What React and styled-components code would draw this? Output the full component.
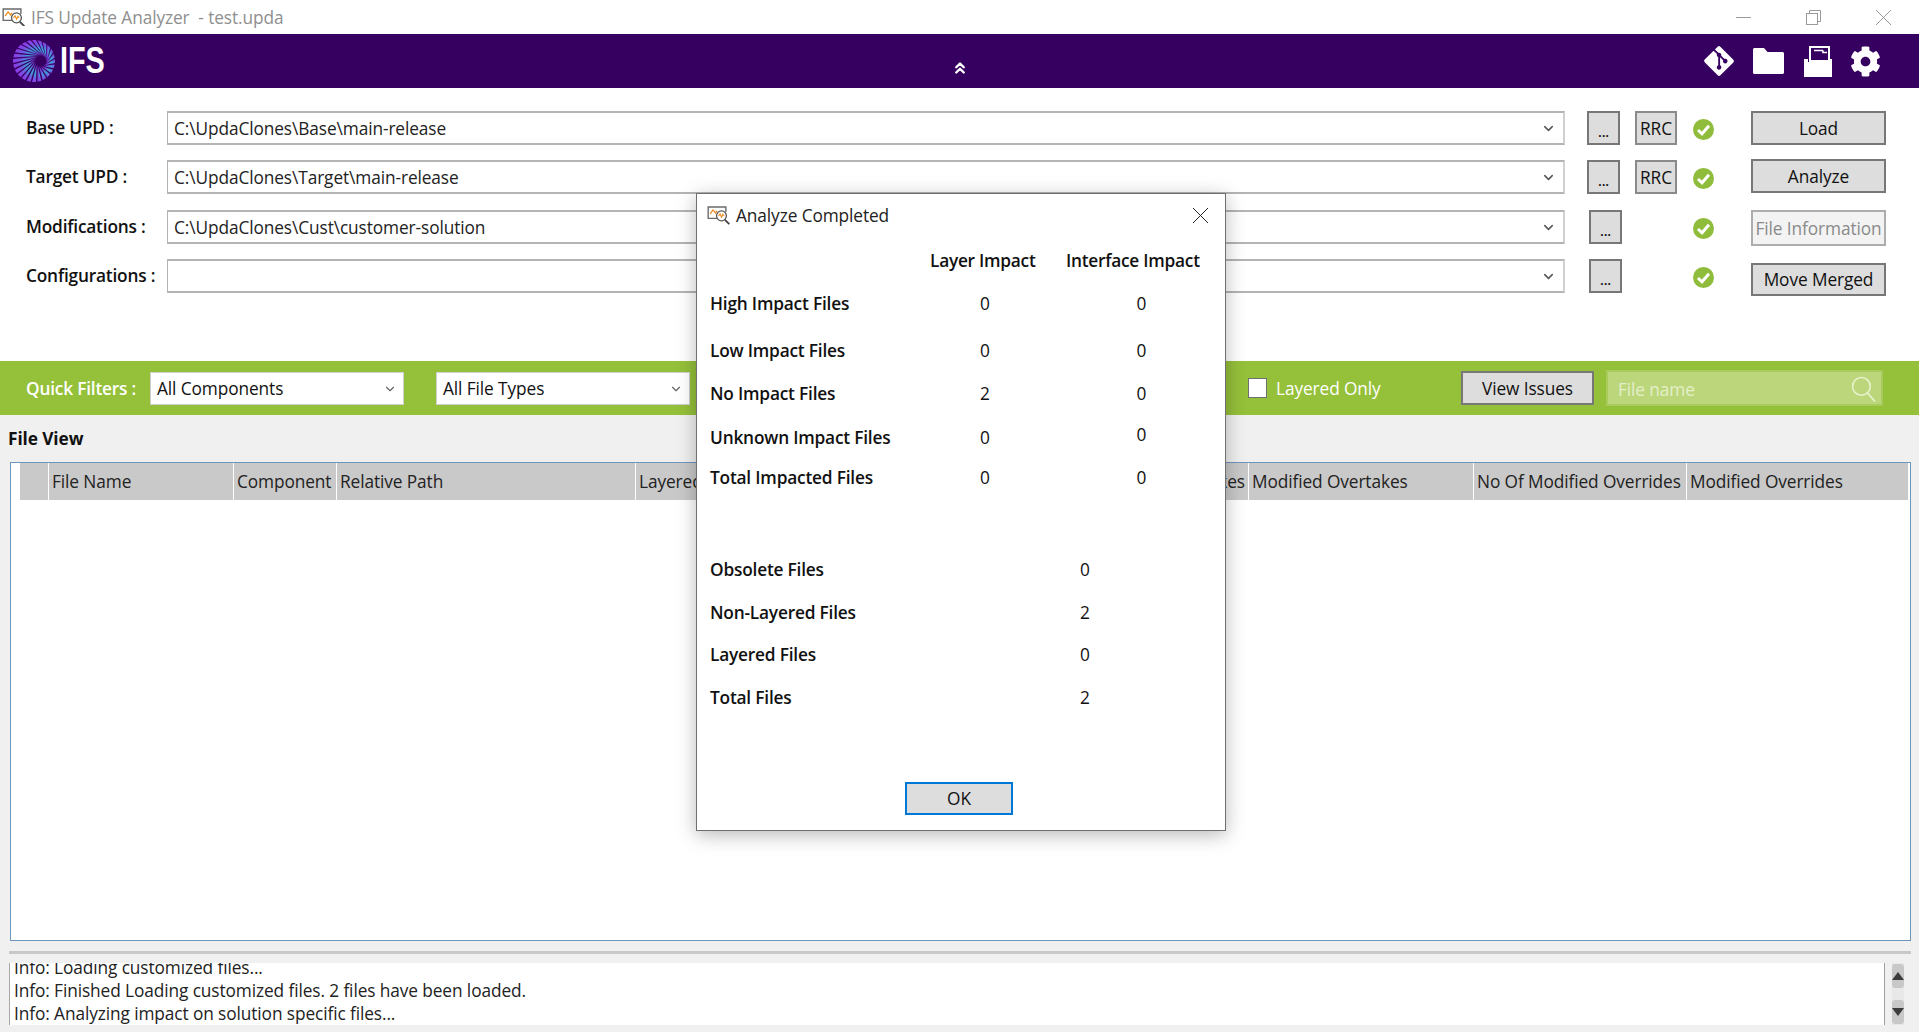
import React from "react";
import styled, { createGlobalStyle } from "styled-components";
import { FaGitAlt, FaCog } from "react-icons/fa";
import { ChevronDown, ChevronsUp } from "lucide-react";

const GlobalStyle = createGlobalStyle`
  html, body {
    margin: 0;
    padding: 0;
    background: #ffffff;
  }
  body {
    font-family: "Open Sans", "Noto Sans", "Liberation Sans", sans-serif;
    font-size: 17.3px;
    letter-spacing: -0.1px;
    color: #111111;
  }
  * {
    box-sizing: border-box;
  }
`;

const Page = styled.div`
  position: relative;
  width: 1919px;
  height: 1032px;
  overflow: hidden;
  display: flex;
  flex-direction: column;
  background: #f0f0f0;
`;

const TitleBar = styled.div`
  height: 34px;
  flex: none;
  display: flex;
  align-items: center;
  padding-left: 2px;
  background: #ffffff;
`;

const WindowTitle = styled.span`
  margin-left: 5px;
  color: #8f8f8f;
  white-space: pre;
`;

const WindowControls = styled.div`
  margin-left: auto;
  display: flex;
  align-items: center;
  gap: 55px;
  padding-right: 28px;
`;

const Banner = styled.div`
  height: 54px;
  flex: none;
  display: grid;
  grid-template-columns: 1fr auto 1fr;
  align-items: center;
  padding: 0 38px 0 13px;
  background: #360061;
`;

const Logo = styled.div`
  display: flex;
  align-items: center;
  gap: 5px;
`;

const LogoText = styled.span`
  display: inline-block;
  font-family: "Liberation Sans", sans-serif;
  font-size: 36px;
  font-weight: 700;
  letter-spacing: 0;
  line-height: 1;
  color: #ffffff;
  transform: scaleX(0.8);
  transform-origin: left center;
`;

const Collapse = styled.div`
  display: flex;
  padding: 14px 0 0 26px;
  color: #ffffff;
`;

const BannerTools = styled.div`
  justify-self: end;
  display: flex;
  align-items: center;
  gap: 20px;
  color: #ffffff;
`;

const GitSlot = styled.div`
  display: flex;
  margin-right: -3px;
`;

const GearSlot = styled.div`
  display: flex;
  margin-left: -2px;
`;

const Form = styled.div`
  height: 273px;
  flex: none;
  padding-top: 23px;
  background: #ffffff;
`;

const FormRow = styled.div`
  display: flex;
  align-items: flex-start;
  height: 34px;
  margin-top: ${(p) => p.$gap || 0}px;
  padding-left: 26px;
`;

const RowLabel = styled.label`
  width: 141px;
  flex: none;
  line-height: 34px;
  font-weight: 600;
  letter-spacing: -0.2px;
`;

const PathBox = styled.div`
  width: 1398px;
  height: 34px;
  flex: none;
  display: flex;
  align-items: center;
  justify-content: space-between;
  padding: 0 7px 0 6px;
  background: #ffffff;
  border: 1px solid #b4b4b4;
  border-width: 2px 2px 2px 1px;
  border-color: #b4b4b4 #d0d0d0 #b4b4b4 #b4b4b4;
  color: #222222;
`;

const Button = styled.button`
  display: block;
  padding: 0;
  font: inherit;
  letter-spacing: inherit;
  color: #111111;
  background: #dddddd;
  border: 2px solid #777777;
  flex: none;
`;

const BrowseButton = styled(Button)`
  width: 33px;
  height: 34px;
  margin-left: ${(p) => p.$left}px;
  line-height: 38px;
  font-size: 14px;
  font-weight: 600;
`;

const RrcButton = styled(Button)`
  width: 42px;
  height: 34px;
  margin-left: 15px;
  border-color: #8a8a8a;
`;

const StatusSlot = styled.div`
  width: 21px;
  height: 21px;
  flex: none;
  margin: 8px 0 0 ${(p) => p.$left}px;
`;

const ActionButton = styled(Button)`
  width: 135px;
  height: ${(p) => p.$h || 34}px;
  margin-left: 37px;
  margin-top: ${(p) => p.$top || 0}px;
  ${(p) =>
    p.disabled &&
    `
    background: #f3f3f3;
    border-color: #adadad;
    color: #8a8a8a;
  `}
`;

const FilterBar = styled.div`
  height: 54px;
  flex: none;
  display: flex;
  align-items: center;
  padding-left: 26px;
  background: #95c03a;
`;

const FilterLabel = styled.span`
  width: 124px;
  flex: none;
  font-weight: 600;
  letter-spacing: -0.2px;
  color: #ffffff;
`;

const Combo = styled.div`
  width: 254px;
  height: 33px;
  flex: none;
  display: flex;
  align-items: center;
  justify-content: space-between;
  margin-right: 32px;
  padding: 1px 6px 0;
  background: #ffffff;
  border: 1px solid #cfcfcf;
`;

const LayeredToggle = styled.label`
  display: flex;
  align-items: center;
  gap: 9px;
  margin-left: 526px;
  width: 213px;
  flex: none;
  color: #ffffff;
`;

const CheckBox = styled.span`
  width: 19px;
  height: 20px;
  background: #ffffff;
  border: 1px solid #6f6f6f;
`;

const ViewIssues = styled(Button)`
  width: 133px;
  height: 34px;
`;

const SearchBox = styled.div`
  width: 277px;
  height: 36px;
  flex: none;
  display: flex;
  align-items: center;
  justify-content: space-between;
  margin-left: 12px;
  padding: 2px 5px 0 10px;
  background: #bcd67c;
  border: 2px solid #a9cb5c;
  color: #e4efc8;
`;

const Workspace = styled.div`
  flex: 1;
  display: flex;
  flex-direction: column;
  padding: 0 8px 7px 10px;
`;

const SectionTitle = styled.div`
  height: 47px;
  flex: none;
  margin-left: -2px;
  line-height: 47px;
  font-weight: 700;
`;

const FileGrid = styled.div`
  height: 479px;
  flex: none;
  background: #ffffff;
  border: 1px solid #6d96bd;
`;

const GridHeader = styled.div`
  display: flex;
  height: 37px;
  padding-left: 9px;
`;

const HeaderCell = styled.div`
  width: ${(p) => p.$w}px;
  flex: none;
  overflow: hidden;
  padding: 0 3px;
  line-height: 38px;
  text-align: ${(p) => (p.$end ? "right" : "left")};
  white-space: nowrap;
  color: #222222;
  background: #c9c9c9;
  border-right: 1px solid #ffffff;
`;

const Splitter = styled.div`
  height: 3px;
  flex: none;
  margin: 10px 0 9px -1px;
  background: #c8c8c8;
`;

const LogRow = styled.div`
  display: flex;
  height: 62px;
  margin-left: -1px;
`;

const LogBox = styled.div`
  width: 1876px;
  flex: none;
  overflow: hidden;
  padding-left: 4px;
  background: #ffffff;
  border-left: 1px solid #a8a8a8;
  border-right: 1px solid #a0a0a0;
`;

const LogLines = styled.div`
  margin-top: -7px;
  line-height: 23px;
  color: #222222;
`;

const ScrollBar = styled.div`
  width: 12px;
  flex: none;
  display: flex;
  flex-direction: column;
  margin-left: 7px;
  padding-top: 1px;
  background: #e8e8e8;
`;

const ScrollButton = styled.div`
  height: 24px;
  display: flex;
  align-items: center;
  justify-content: center;
  margin-top: ${(p) => p.$top || 0}px;
  border-radius: 3px;
  background: #c8c8c8;
`;

const Dialog = styled.div`
  position: absolute;
  left: 696px;
  top: 193px;
  width: 530px;
  height: 638px;
  display: flex;
  flex-direction: column;
  background: #ffffff;
  border: 1px solid #6f6f6f;
  box-shadow: 0 4px 18px rgba(0, 0, 0, 0.28);
`;

const DialogHead = styled.div`
  height: 46px;
  flex: none;
  display: flex;
  align-items: center;
  padding: 0 17px 3px 10px;
`;

const DialogTitle = styled.span`
  margin-left: 5px;
  color: #222222;
`;

const CloseSlot = styled.div`
  display: flex;
  margin-left: auto;
`;

const ImpactGrid = styled.div`
  display: grid;
  grid-template-columns: 222px 106px 1fr;
  padding-left: 13px;
`;

const ImpactRow = styled.div`
  display: contents;
`;

const ImpactCell = styled.div`
  height: ${(p) => p.$h}px;
  line-height: ${(p) => p.$h - 2 * (p.$lift || 0)}px;
  padding-left: ${(p) => p.$pad || 0}px;
  font-weight: ${(p) => (p.$label ? 600 : 400)};
  letter-spacing: ${(p) => (p.$label ? "-0.2px" : "inherit")};
  text-align: ${(p) => (p.$label ? "left" : "center")};
  white-space: nowrap;
`;

const ColumnHead = styled.div`
  height: 42px;
  margin-left: ${(p) => p.$inset}px;
  line-height: 42px;
  font-weight: 600;
  letter-spacing: -0.25px;
  white-space: nowrap;
`;

const TotalsGrid = styled.div`
  display: grid;
  grid-template-columns: 345px 60px;
  margin-top: ${(p) => p.$top}px;
  padding-left: 13px;
`;

const DialogFoot = styled.div`
  margin-top: auto;
  padding-bottom: 15px;
  display: flex;
  justify-content: center;
`;

const OkButton = styled(Button)`
  width: 108px;
  height: 33px;
  margin-left: -4px;
  border: 2px solid #0078d7;
`;

const AppIcon = ({ size = 24 }) => (
  <svg width={size} height={size * 0.78} viewBox="0 0 24 19" fill="none">
    <path d="M15 12.5H1V1h18v5" stroke="#6a6a6a" strokeWidth="1.4" />
    <path d="M3 8l3-4 2.5 3L10 5" stroke="#f08a1d" strokeWidth="1.3" />
    <circle cx="14.5" cy="10" r="5" fill="#ffffff" stroke="#555555" strokeWidth="1.3" />
    <path d="M11.5 10l1.6-2 1.5 3.4 1.3-3 1.3 1.6" stroke="#f08a1d" strokeWidth="1.1" />
    <path d="M18 14l4.5 4.5" stroke="#444444" strokeWidth="1.8" />
  </svg>
);

const IfsSwirl = () => {
  const blades = Array.from({ length: 24 }, (_, i) => {
    const a = (i / 24) * Math.PI * 2;
    const w = 0.095;
    const ox1 = 21 + 21 * Math.cos(a - w);
    const oy1 = 21 + 21 * Math.sin(a - w);
    const ox2 = 21 + 21 * Math.cos(a + w);
    const oy2 = 21 + 21 * Math.sin(a + w);
    const ix = 28 + 5.5 * Math.cos(a + 0.9);
    const iy = 21 + 5.5 * Math.sin(a + 0.9);
    return `M${ox1.toFixed(2)} ${oy1.toFixed(2)}L${ox2.toFixed(2)} ${oy2.toFixed(2)}L${ix.toFixed(2)} ${iy.toFixed(2)}Z`;
  });
  return (
    <svg width="42" height="42" viewBox="0 0 42 42">
      <defs>
        <radialGradient id="swirl" cx="66%" cy="50%" r="62%">
          <stop offset="0.2" stopColor="#3f9ad8" />
          <stop offset="0.5" stopColor="#6a62e0" />
          <stop offset="1" stopColor="#8a3de6" />
        </radialGradient>
      </defs>
      {blades.map((d) => (
        <path key={d} d={d} fill="url(#swirl)" />
      ))}
    </svg>
  );
};

const FolderIcon = () => (
  <svg width="31" height="26" viewBox="0 0 31 26">
    <path d="M0 1.500C0 .7.7 0 1.500 0h9.500l3.500 4h15C30.300 4 31 4.700 31 5.500V24.500c0 .8-.7 1.500-1.500 1.500h-28C.7 26 0 25.300 0 24.500Z" fill="#ffffff" />
  </svg>
);

const TrayIcon = () => (
  <svg width="28" height="31" viewBox="0 0 28 31">
    <rect x="6" y="1" width="19" height="14" fill="none" stroke="#ffffff" strokeWidth="2" />
    <path d="M10 4.500h9M19 4.500v2h4" fill="none" stroke="#ffffff" strokeWidth="1.600" />
    <path d="M0 13h4v3h20v-3h4v18H0Z" fill="#ffffff" />
  </svg>
);

const StatusIcon = () => (
  <svg width="21" height="21" viewBox="0 0 21 21">
    <circle cx="10.500" cy="10.500" r="10.500" fill="#8fbc3b" />
    <path d="M5 11l4 3.800 7-8" fill="none" stroke="#ffffff" strokeWidth="3" />
  </svg>
);

const MinimizeIcon = () => (
  <svg width="15" height="15" viewBox="0 0 15 15">
    <path d="M0 7.500h15" stroke="#9a9a9a" />
  </svg>
);

const RestoreIcon = () => (
  <svg width="15" height="15" viewBox="0 0 15 15" fill="none">
    <path d="M3.500 3V.5h11v11H12" stroke="#9a9a9a" />
    <rect x=".5" y="3.500" width="11" height="11" stroke="#9a9a9a" />
  </svg>
);

const CloseIcon = ({ color = "#9a9a9a" }) => (
  <svg width="15" height="15" viewBox="0 0 15 15">
    <path d="M0 0l15 15M15 0L0 15" stroke={color} />
  </svg>
);

const SearchIcon = () => (
  <svg width="25" height="27" viewBox="0 0 24 26" fill="none" stroke="#e8f2cc" strokeWidth="1.500">
    <circle cx="10" cy="10" r="8.500" />
    <path d="M16 16.500l7 8" />
  </svg>
);

const Triangle = ({ down }) => (
  <svg width="12" height="8" viewBox="0 0 12 8">
    <path d={down ? "M0 0h12L6 8Z" : "M0 8h12L6 0Z"} fill="#3c3c3c" />
  </svg>
);

const pathRows = [
  { label: "Base UPD :", value: "C:\\UpdaClones\\Base\\main-release", browse: 22, rrc: true, gap: 0 },
  { label: "Target UPD :", value: "C:\\UpdaClones\\Target\\main-release", browse: 22, rrc: true, gap: 15 },
  { label: "Modifications :", value: "C:\\UpdaClones\\Cust\\customer-solution", browse: 24, gap: 16 },
  { label: "Configurations :", value: "", browse: 24, gap: 15 },
];

const actions = [
  { text: "Load" },
  { text: "Analyze", top: -1 },
  { text: "File Information", disabled: true, h: 36 },
  { text: "Move Merged", top: 4, h: 33 },
];

const columns = [
  { title: "", w: 29 },
  { title: "File Name", w: 185 },
  { title: "Component", w: 103 },
  { title: "Relative Path", w: 299 },
  { title: "Layered", w: 385 },
  { title: "No Of Overtakes", w: 228, end: true },
  { title: "Modified Overtakes", w: 225 },
  { title: "No Of Modified Overrides", w: 213 },
  { title: "Modified Overrides", w: 222 },
];

const impactRows = [
  { label: "High Impact Files", layer: "0", iface: "0", h: 44 },
  { label: "Low Impact Files", layer: "0", iface: "0", h: 50 },
  { label: "No Impact Files", layer: "2", iface: "0", h: 36 },
  { label: "Unknown Impact Files", layer: "0", iface: "0", h: 52, lift: 3 },
  { label: "Total Impacted Files", layer: "0", iface: "0", h: 28 },
];

const totalRows = [
  { label: "Obsolete Files", value: "0", h: 43 },
  { label: "Non-Layered Files", value: "2", h: 43 },
  { label: "Layered Files", value: "0", h: 42 },
  { label: "Total Files", value: "2", h: 44 },
];

const App = () => {
  return (
    <Page>
      <GlobalStyle />
      <TitleBar>
        <AppIcon />
        <WindowTitle>IFS Update Analyzer  - test.upda</WindowTitle>
        <WindowControls>
          <MinimizeIcon />
          <RestoreIcon />
          <CloseIcon />
        </WindowControls>
      </TitleBar>

      <Banner>
        <Logo>
          <IfsSwirl />
          <LogoText>IFS</LogoText>
        </Logo>
        <Collapse>
          <ChevronsUp size={18} strokeWidth={3.2} />
        </Collapse>
        <BannerTools>
          <GitSlot>
            <FaGitAlt size={34} />
          </GitSlot>
          <FolderIcon />
          <TrayIcon />
          <GearSlot>
            <FaCog size={31} />
          </GearSlot>
        </BannerTools>
      </Banner>

      <Form>
        {pathRows.map((row, i) => (
          <FormRow key={row.label} $gap={row.gap}>
            <RowLabel>{row.label}</RowLabel>
            <PathBox>
              {row.value}
              <ChevronDown size={15} strokeWidth={2.4} color="#555555" style={{ marginLeft: "auto" }} />
            </PathBox>
            <BrowseButton $left={row.browse}>...</BrowseButton>
            {row.rrc && <RrcButton>RRC</RrcButton>}
            <StatusSlot $left={row.rrc ? 16 : 71}>
              <StatusIcon />
            </StatusSlot>
            <ActionButton
              disabled={actions[i].disabled}
              $top={actions[i].top}
              $h={actions[i].h}
            >
              {actions[i].text}
            </ActionButton>
          </FormRow>
        ))}
      </Form>

      <FilterBar>
        <FilterLabel>Quick Filters :</FilterLabel>
        <Combo>
          All Components
          <ChevronDown size={14} color="#666666" />
        </Combo>
        <Combo>
          All File Types
          <ChevronDown size={14} color="#666666" />
        </Combo>
        <LayeredToggle>
          <CheckBox />
          Layered Only
        </LayeredToggle>
        <ViewIssues>View Issues</ViewIssues>
        <SearchBox>
          File name
          <SearchIcon />
        </SearchBox>
      </FilterBar>

      <Workspace>
        <SectionTitle>File View</SectionTitle>
        <FileGrid>
          <GridHeader>
            {columns.map((col) => (
              <HeaderCell key={col.title || "blank"} $w={col.w} $end={col.end}>
                {col.title}
              </HeaderCell>
            ))}
          </GridHeader>
        </FileGrid>
        <Splitter />
        <LogRow>
          <LogBox>
            <LogLines>
              <div>Info: Loading customized files...</div>
              <div>Info: Finished Loading customized files. 2 files have been loaded.</div>
              <div>Info: Analyzing impact on solution specific files...</div>
            </LogLines>
          </LogBox>
          <ScrollBar>
            <ScrollButton>
              <Triangle />
            </ScrollButton>
            <ScrollButton $top={12}>
              <Triangle down />
            </ScrollButton>
          </ScrollBar>
        </LogRow>
      </Workspace>

      <Dialog>
        <DialogHead>
          <AppIcon />
          <DialogTitle>Analyze Completed</DialogTitle>
          <CloseSlot>
            <CloseIcon color="#222222" />
          </CloseSlot>
        </DialogHead>
        <ImpactGrid>
          <div />
          <ColumnHead $inset={-2}>Layer Impact</ColumnHead>
          <ColumnHead $inset={28}>Interface Impact</ColumnHead>
          {impactRows.map((row) => (
            <ImpactRow key={row.label}>
              <ImpactCell $label $h={row.h}>
                {row.label}
              </ImpactCell>
              <ImpactCell $h={row.h}>{row.layer}</ImpactCell>
              <ImpactCell $h={row.h} $lift={row.lift} $pad={20}>
                {row.iface}
              </ImpactCell>
            </ImpactRow>
          ))}
        </ImpactGrid>
        <TotalsGrid $top={56}>
          {totalRows.map((row) => (
            <ImpactRow key={row.label}>
              <ImpactCell $label $h={row.h}>
                {row.label}
              </ImpactCell>
              <ImpactCell $h={row.h}>{row.value}</ImpactCell>
            </ImpactRow>
          ))}
        </TotalsGrid>
        <DialogFoot>
          <OkButton>OK</OkButton>
        </DialogFoot>
      </Dialog>
    </Page>
  );
};

export default App;
